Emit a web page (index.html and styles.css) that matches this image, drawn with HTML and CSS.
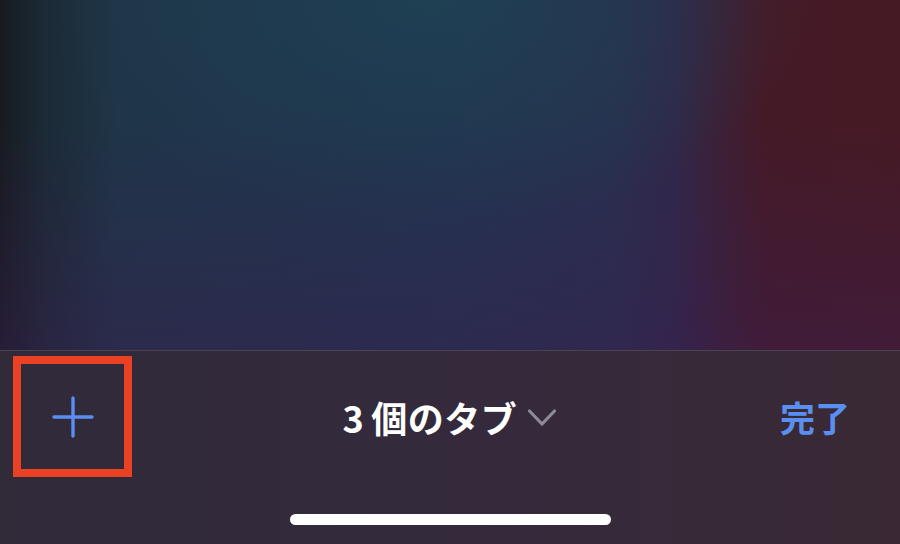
FILE: index.html
```html
<!DOCTYPE html>
<html lang="ja">
<head>
    <meta charset="UTF-8" />
    <meta name="viewport" content="width=device-width, initial-scale=1.0" />
    <title>タブ</title>
    <link rel="stylesheet" href="styles.css">
</head>
<body>
    <div class="backdrop"></div>
    <div class="toolbar">
        <div class="toolbar-row">
            <div class="add-cell">
                <button class="add-btn highlight" aria-label="新規タブ">
                    <svg width="44" height="44" viewBox="0 0 44 44">
                        <path d="M22 3 V41 M3 22 H41" stroke="#5b8df2" stroke-width="3.4" stroke-linecap="round" fill="none" />
                    </svg>
                </button>
            </div>
            <div class="tab-title">
                <span class="title-text"><span class="count">3</span>個のタブ</span>
                <svg class="chevron" width="30" height="20" viewBox="0 0 30 20">
                    <path d="M2.5 3 L15 16 L27.5 3" stroke="#8e8a97" stroke-width="3.2" stroke-linecap="round" stroke-linejoin="round" fill="none" />
                </svg>
            </div>
            <div class="done-cell">
                <a href="#" class="done">完了</a>
            </div>
        </div>
        <div class="home-bar"></div>
    </div>
</body>
</html>
```

FILE: styles.css
```css
body {
    font-family: "Noto Sans CJK JP", "Noto Sans", sans-serif;
    margin: 0;
    padding: 0;
    height: 544px;
    overflow: hidden;
    display: flex;
    flex-direction: column;
    background-color: #2f2a38;
}

.backdrop {
    height: 350px;
    background:
        radial-gradient(ellipse 380px 220px at 48% 0%, rgba(30, 68, 84, 0.7), transparent),
        linear-gradient(to bottom, rgba(0, 0, 0, 0) 35%, rgba(58, 30, 80, 0.45) 100%),
        linear-gradient(to right, #171b20 0%, #1b2a36 5%, #1f3548 13%, #213450 50%, #28304f 68%, #30284a 75%, #3c2036 80%, #451a27 85%, #461a24 100%);
}

.toolbar {
    height: 193px;
    border-top: 1px solid #4a4152;
    background: linear-gradient(to right, #302a39 0%, #342a3c 50%, #3a2935 100%);
    display: flex;
    flex-direction: column;
}

.toolbar-row {
    display: grid;
    grid-template-columns: 1fr auto 1fr;
    align-items: center;
    padding: 5px 13px 0;
}

.add-btn {
    width: 119px;
    height: 121px;
    box-sizing: border-box;
    background: none;
    padding: 0;
    display: flex;
    align-items: center;
    justify-content: center;
    cursor: pointer;
}

.highlight {
    border: 8px solid #ea4024;
}

.tab-title {
    display: flex;
    align-items: center;
    gap: 10px;
}

.title-text {
    color: #ffffff;
    font-size: 36px;
    font-weight: 600;
    letter-spacing: 0.5px;
}

.count {
    margin-right: 7px;
}

.chevron {
    margin-top: 2px;
}

.done-cell {
    text-align: right;
    padding-right: 37px;
}

.done {
    color: #5a8ff2;
    font-size: 35px;
    font-weight: 600;
    text-decoration: none;
}

.home-bar {
    width: 321px;
    height: 11px;
    border-radius: 6px;
    background-color: #ffffff;
    margin: 37px auto 0;
}
```
